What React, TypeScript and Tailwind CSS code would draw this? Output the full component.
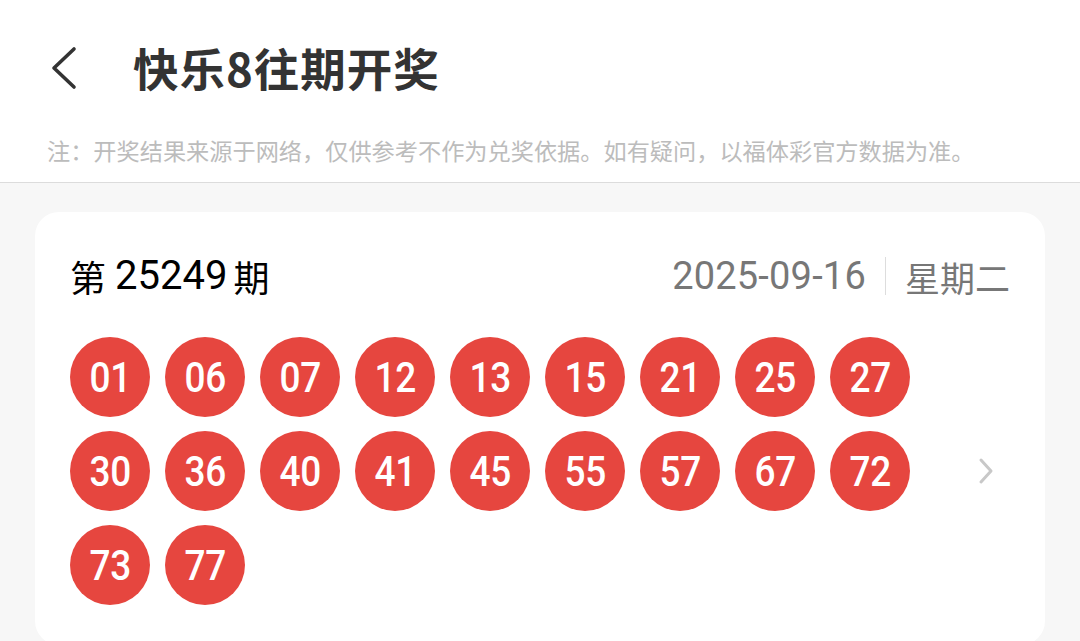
import React from "react";

const row = ["01","06","07","12","13","15","21","25","27","30","36","40","41","45","55","57","67","72","73","77"];

export default function App() {
  const cjk = { fontFamily: '"Roboto","Noto Sans CJK SC",sans-serif' };
  return (
    <div className="min-h-[641px] bg-[#f7f7f7]" style={cjk}>
      <div className="bg-white border-b border-[#dcdcdc]">
        <div className="h-[138px] flex items-center pl-[50px]">
          <svg width="30" height="46" viewBox="0 0 30 46" className="shrink-0 -mt-[2px]">
            <polyline points="24,4 4,23 24,42" fill="none" stroke="#333" strokeWidth="3.6" strokeLinecap="round" strokeLinejoin="round" />
          </svg>
          <div className="ml-[53px] -mt-[3px] text-[45.5px] font-bold text-[#333] leading-none tracking-[1px]" style={{ fontFamily: '"Noto Sans CJK SC",sans-serif' }}>
            快乐8往期开奖
          </div>
        </div>
        <div className="pl-[47px] pb-[20px] text-[23.2px] leading-[24px] text-[#bcbcbc]" style={{ fontFamily: '"Noto Sans CJK SC",sans-serif' }}>
          注：开奖结果来源于网络，仅供参考不作为兑奖依据。如有疑问，以福体彩官方数据为准。
        </div>
      </div>
      <div className="mx-[35px] mt-[29px] rounded-[24px] bg-white px-[35px] pt-[44px] pb-[40px]">
        <div className="h-[40px] flex items-center justify-between">
          <div className="flex items-center text-black leading-none">
            <span className="text-[36px]" style={{ fontFamily: '"Noto Sans CJK SC",sans-serif' }}>第</span>
            <span className="text-[40px] ml-[9px] mr-[6px]" style={{ fontFamily: '"Roboto",sans-serif' }}>25249</span>
            <span className="text-[36px]" style={{ fontFamily: '"Noto Sans CJK SC",sans-serif' }}>期</span>
          </div>
          <div className="flex items-center text-[#777] leading-none">
            <span className="text-[38px] tracking-[0.2px]" style={{ fontFamily: '"Roboto",sans-serif' }}>2025-09-16</span>
            <span className="ml-[19px] mr-[19px] w-px h-[38px] bg-[#ddd]"></span>
            <span className="text-[35px]" style={{ fontFamily: '"Noto Sans CJK SC",sans-serif' }}>星期二</span>
          </div>
        </div>
        <div className="mt-[41px] flex">
          <div className="w-[840px] flex flex-wrap gap-x-[15px] gap-y-[14px]">
            {row.map((n) => (
              <div key={n} className="w-[80px] h-[80px] rounded-full bg-[#e6463f] flex items-center justify-center">
                <span className="text-white text-[43px] font-medium leading-none scale-x-[0.86] inline-block tracking-[-0.3px]" style={{ fontFamily: '"Roboto",sans-serif' }}>{n}</span>
              </div>
            ))}
          </div>
          <div className="flex-1 flex items-center justify-end pr-[14px]">
            <svg width="20" height="28" viewBox="0 0 20 28">
              <polyline points="5,3 15,14 5,25" fill="none" stroke="#c8c8c8" strokeWidth="3" strokeLinecap="round" strokeLinejoin="round" />
            </svg>
          </div>
        </div>
      </div>
    </div>
  );
}
